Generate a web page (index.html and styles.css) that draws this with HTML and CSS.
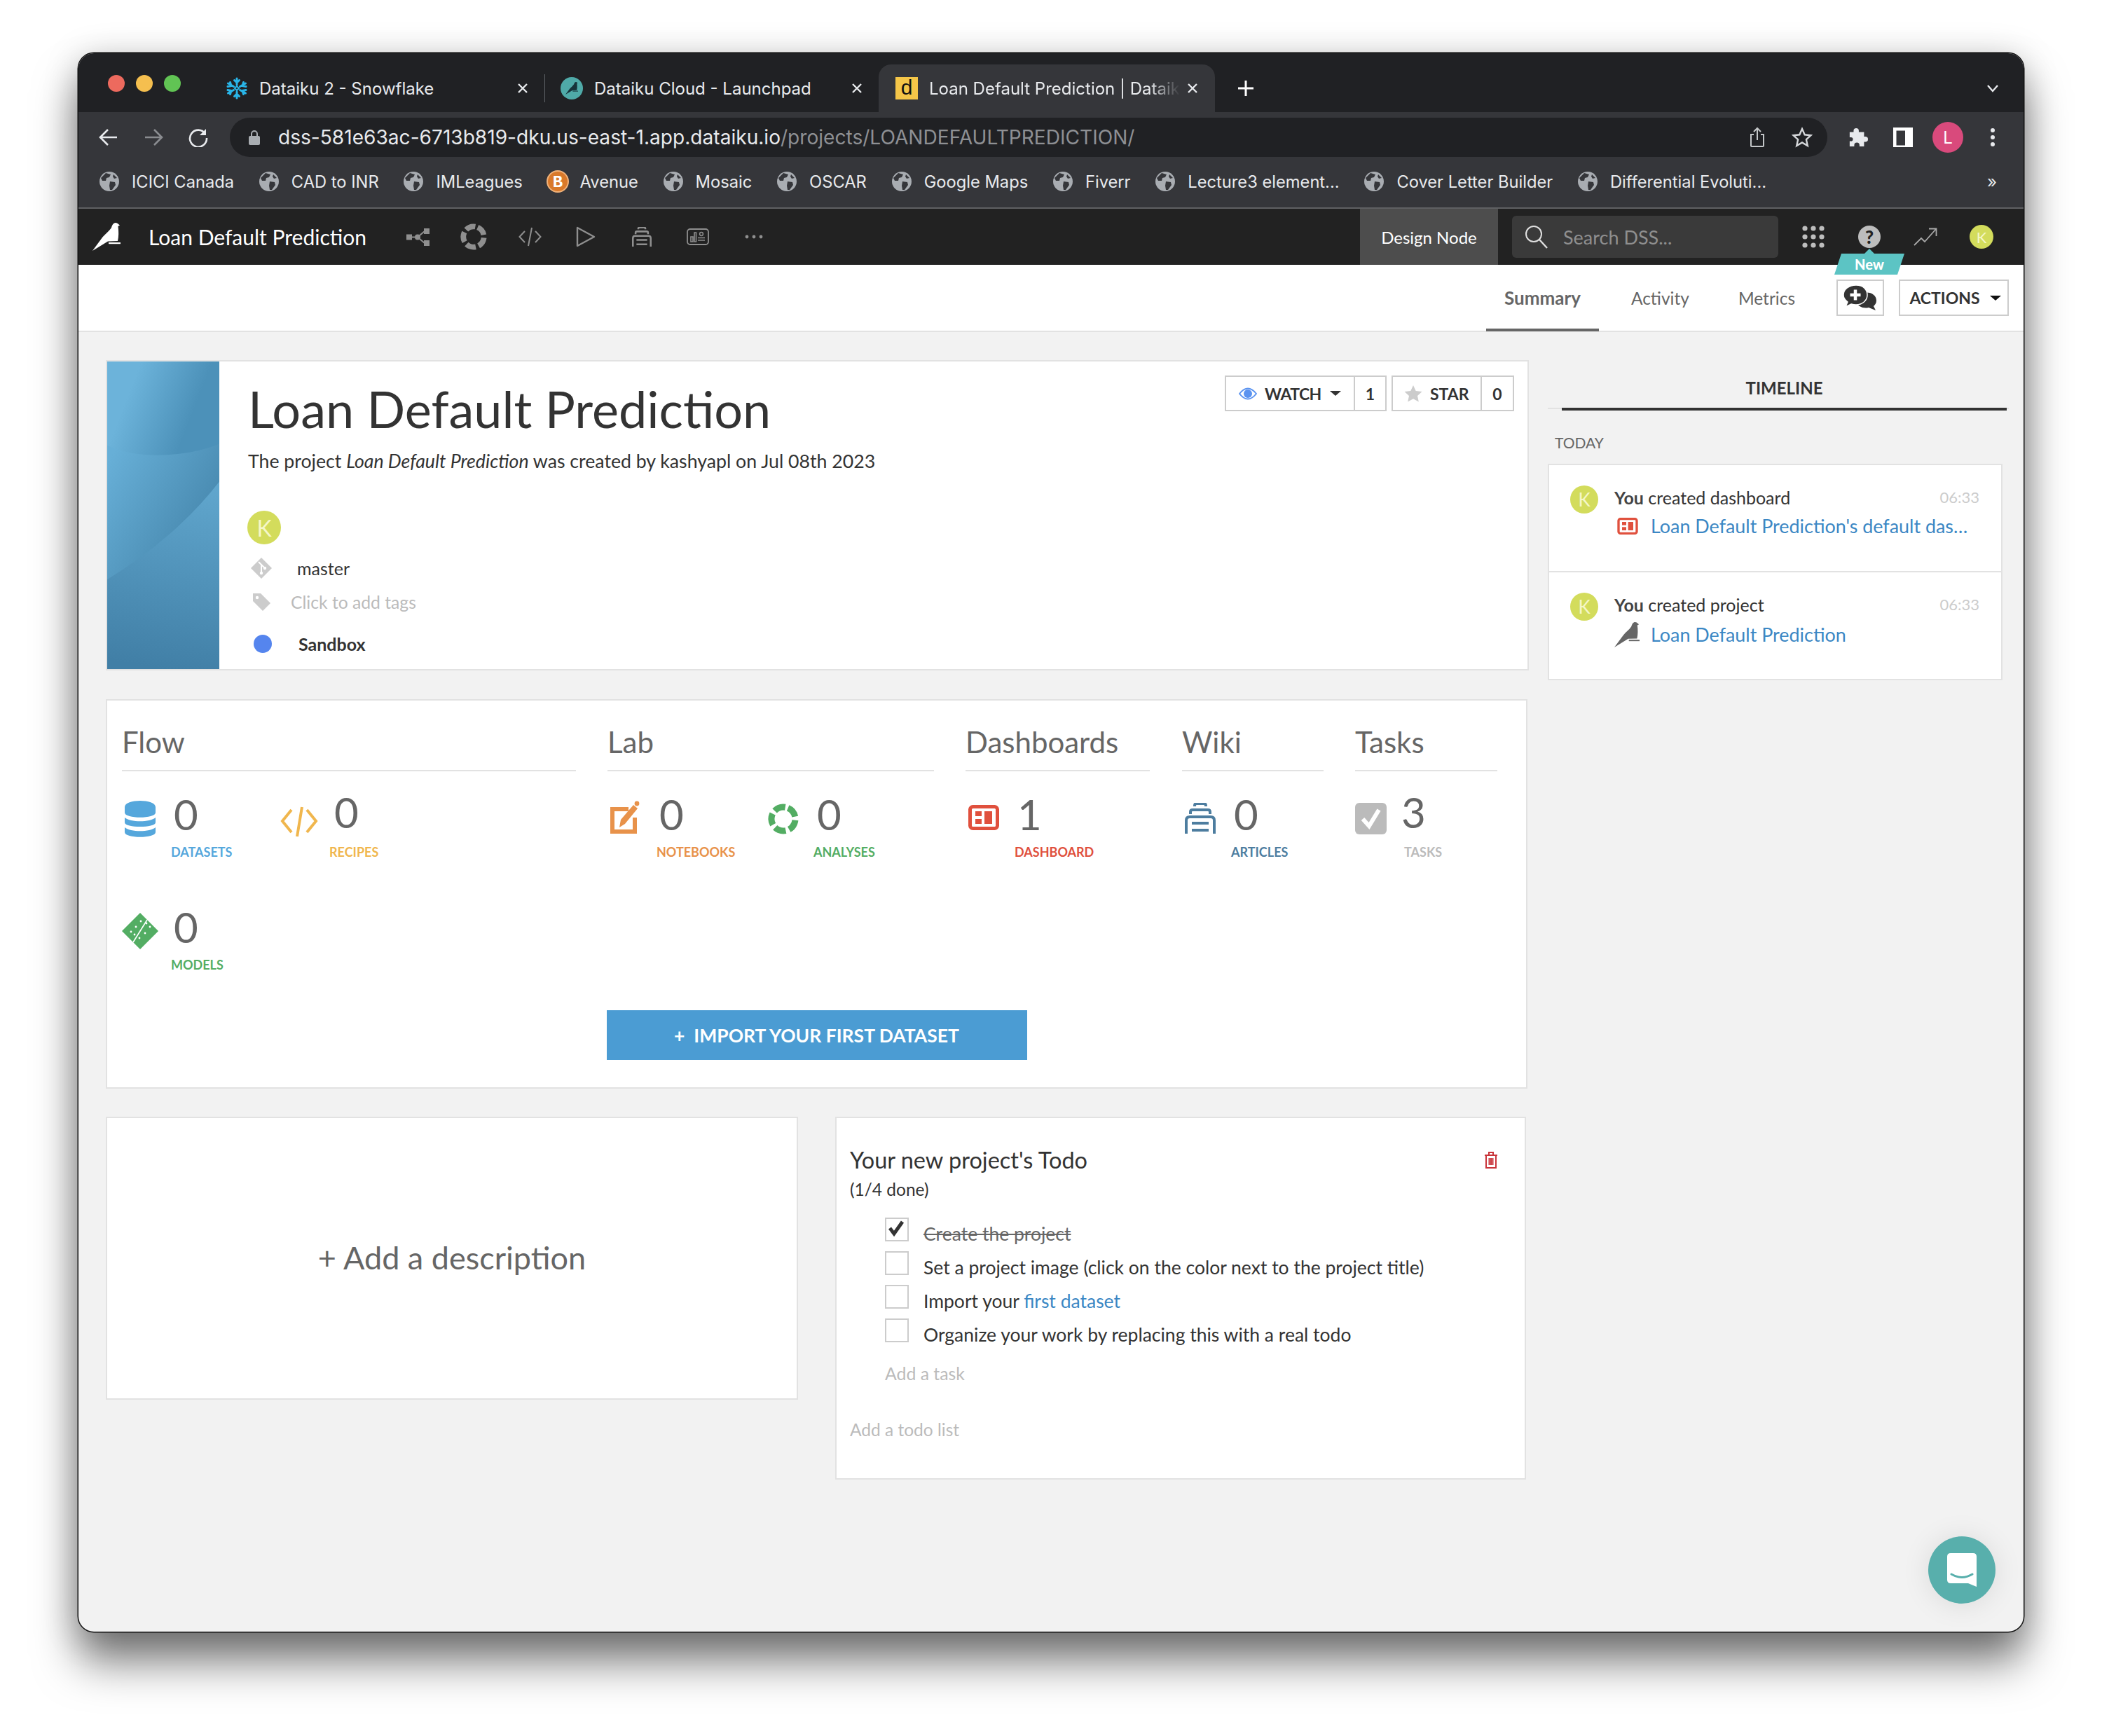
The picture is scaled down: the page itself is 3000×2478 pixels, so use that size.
FILE: index.html
```html
<!DOCTYPE html>
<html lang="en">
<head>
<meta charset="utf-8">
<title>Loan Default Prediction | Dataiku</title>
<link rel="stylesheet" href="styles.css">
</head>
<body>
<svg class="defs" width="0" height="0">
  <defs>
    <symbol id="globe" viewBox="0 0 28 28">
      <circle cx="14" cy="14" r="14" fill="#a9adb2"/>
      <path d="M9 2 L16 4 L14 8 L10 9 L9 13 L4 13 L2 9 Z M15 14 L22 15 L23 19 L18 26 L15 26 L14 20 Z M20 4 L25 9 L21 10 L19 7 Z" fill="#35363a"/>
    </symbol>
    <symbol id="bird" viewBox="0 0 40 40">
      <path d="M0 40 L14 21 C18 16 24 12 27 7 C28 3 30 0 33 0 C35 0 36 1 37 2 L39 3.5 L36.5 5 C37.5 12 37.5 20 36 26 L22 26.5 Z"/>
      <rect x="23" y="28" width="17" height="2.2"/>
    </symbol>
    <symbol id="wiki" viewBox="0 0 44 44">
      <path d="M14 5 V4 Q14 1 17 1 H27 Q30 1 30 4 V5 M8 16 V13 Q8 10 11 10 H33 Q36 10 36 13 V16 M2 44 V25 Q2 20 7 20 H37 Q42 20 42 25 V44 M10 29 H34 M10 39 H34" fill="none" stroke="currentColor" stroke-width="4"/>
    </symbol>
    <symbol id="dash" viewBox="0 0 44 36">
      <rect x="2.5" y="2.5" width="39" height="31" rx="4" fill="none" stroke="currentColor" stroke-width="5"/>
      <rect x="10" y="9" width="9" height="7" fill="currentColor"/>
      <rect x="10" y="20" width="9" height="7" fill="currentColor"/>
      <rect x="23" y="9" width="11" height="18" fill="currentColor"/>
    </symbol>
    <symbol id="ring" viewBox="0 0 44 44">
      <circle cx="22" cy="22" r="17" fill="none" stroke="currentColor" stroke-width="9" stroke-dasharray="16.4 5" transform="rotate(-67 22 22)"/>
    </symbol>
    <symbol id="close" viewBox="0 0 16 16">
      <path d="M2 2 L14 14 M14 2 L2 14" fill="none" stroke="currentColor" stroke-width="2.4"/>
    </symbol>
  </defs>
</svg>

<div class="window">
  <div class="tabstrip">
    <div class="lights">
      <span class="light light-red"></span>
      <span class="light light-yellow"></span>
      <span class="light light-green"></span>
    </div>
    <div class="tab tab-one">
      <svg class="favicon" viewBox="0 0 32 32" fill="none" stroke="#29b5e8" stroke-width="3" stroke-linecap="round">
        <path d="M16 2 V11 M12.5 4.5 L16 8 L19.5 4.5 M16 30 V21 M12.5 27.5 L16 24 L19.5 27.5 M3.5 9 L11.5 13.5 M3 13.5 L8 12.5 L6.5 7.5 M28.5 23 L20.5 18.5 M29 18.5 L24 19.5 L25.5 24.5 M28.5 9 L20.5 13.5 M29 13.5 L24 12.5 L25.5 7.5 M3.5 23 L11.5 18.5 M3 18.5 L8 19.5 L6.5 24.5"/>
        <path d="M16 13 L19 16 L16 19 L13 16 Z" stroke-width="2"/>
      </svg>
      <span class="tab-title">Dataiku 2 - Snowflake</span>
      <svg class="tab-close"><use href="#close"/></svg>
    </div>
    <span class="tab-sep"></span>
    <div class="tab tab-two">
      <svg class="favicon" viewBox="0 0 32 32">
        <circle cx="16" cy="16" r="16" fill="#4faaa8"/>
        <svg x="7" y="6" width="18" height="20" viewBox="0 0 40 40" fill="#17333a"><use href="#bird"/></svg>
      </svg>
      <span class="tab-title">Dataiku Cloud - Launchpad</span>
      <svg class="tab-close"><use href="#close"/></svg>
    </div>
    <div class="tab tab-active">
      <span class="favicon-d">d</span>
      <span class="tab-title tab-title-fade">Loan Default Prediction | Dataiku</span>
      <svg class="tab-close"><use href="#close"/></svg>
    </div>
    <svg class="tab-plus" viewBox="0 0 24 24"><path d="M12 1 V23 M1 12 H23" fill="none" stroke="#fff" stroke-width="3"/></svg>
    <svg class="tab-chevron" viewBox="0 0 18 12"><path d="M2 2 L9 10 L16 2" fill="none" stroke="#e8eaed" stroke-width="2.4"/></svg>
  </div>

  <div class="toolbar">
    <span class="tool"><svg viewBox="0 0 28 28" class="tool-icon"><path d="M26 14 H3 M13 3 L2 14 L13 25" fill="none" stroke="#e8eaed" stroke-width="2.6"/></svg></span>
    <span class="tool"><svg viewBox="0 0 28 28" class="tool-icon"><path d="M2 14 H25 M15 3 L26 14 L15 25" fill="none" stroke="#8a8c90" stroke-width="2.6"/></svg></span>
    <span class="tool"><svg viewBox="0 0 28 28" class="tool-icon"><path d="M24 9 A12 12 0 1 0 26 15" fill="none" stroke="#e8eaed" stroke-width="2.6"/><path d="M25 2 V11 H16 Z" fill="#e8eaed"/></svg></span>
    <div class="address">
      <svg class="lock" viewBox="0 0 16 22"><path d="M4 9 V6 A4 4 0 0 1 12 6 V9" fill="none" stroke="#a9adb2" stroke-width="2"/><rect y="9" width="16" height="13" rx="2" fill="#a9adb2"/></svg>
      <span class="url">dss-581e63ac-6713b819-dku.us-east-1.app.dataiku.io<span class="url-path">/projects/LOANDEFAULTPREDICTION/</span></span>
      <span class="addr-tool"><svg viewBox="0 0 24 30" class="addr-icon"><path d="M7 11 H3 V27 Q3 28 4 28 H20 Q21 28 21 27 V11 H17 M12 19 V2 M7 7 L12 2 L17 7" fill="none" stroke="#c4c7c9" stroke-width="2"/></svg></span>
      <span class="addr-tool"><svg viewBox="0 0 30 30" class="addr-icon"><path d="M15 3 L18.7 11.3 L27.5 12.2 L20.9 18.2 L22.8 27 L15 22.4 L7.2 27 L9.1 18.2 L2.5 12.2 L11.3 11.3 Z" fill="none" stroke="#d5d7da" stroke-width="2.4"/></svg></span>
    </div>
    <div class="ext">
      <span class="tool"><svg viewBox="0 0 30 30" class="tool-icon"><path d="M12 1 Q16 1 16 5 V7 H24 V14 H26 Q30 14 30 18 Q30 22 26 22 H24 V29 H17 V27 Q17 23 13 23 Q9 23 9 27 V29 H2 V21 H4 Q7 21 7 18 Q7 15 4 15 H2 V7 H8 V5 Q8 1 12 1 Z" fill="#e8eaed"/></svg></span>
      <span class="tool"><svg viewBox="0 0 28 28" class="tool-icon"><rect x="2" y="2" width="24" height="26" fill="none" stroke="#fff" stroke-width="5"/><rect x="17" y="3" width="10" height="24" fill="#fff"/></svg></span>
      <span class="tool"><span class="profile">L</span></span>
      <span class="tool"><svg viewBox="0 0 6 26" class="menu-icon"><circle cx="3" cy="3" r="3" fill="#e8eaed"/><circle cx="3" cy="13" r="3" fill="#e8eaed"/><circle cx="3" cy="23" r="3" fill="#e8eaed"/></svg></span>
    </div>
  </div>

  <div class="bookmarks">
    <span class="bm"><svg class="bm-icon"><use href="#globe"/></svg>ICICI Canada</span>
    <span class="bm"><svg class="bm-icon"><use href="#globe"/></svg>CAD to INR</span>
    <span class="bm"><svg class="bm-icon"><use href="#globe"/></svg>IMLeagues</span>
    <span class="bm bm-avenue"><svg class="bm-icon bm-icon-b" viewBox="0 0 32 32"><circle cx="16" cy="16" r="15" fill="#d9792a" stroke="#f0b27a" stroke-width="2"/><text x="16" y="24" text-anchor="middle" class="bm-letter">B</text></svg>Avenue</span>
    <span class="bm"><svg class="bm-icon"><use href="#globe"/></svg>Mosaic</span>
    <span class="bm"><svg class="bm-icon"><use href="#globe"/></svg>OSCAR</span>
    <span class="bm"><svg class="bm-icon"><use href="#globe"/></svg>Google Maps</span>
    <span class="bm"><svg class="bm-icon"><use href="#globe"/></svg>Fiverr</span>
    <span class="bm"><svg class="bm-icon"><use href="#globe"/></svg>Lecture3 element...</span>
    <span class="bm"><svg class="bm-icon"><use href="#globe"/></svg>Cover Letter Builder</span>
    <span class="bm"><svg class="bm-icon"><use href="#globe"/></svg>Differential Evoluti...</span>
    <span class="bm-more">»</span>
  </div>

  <nav class="dss-nav">
    <svg class="dss-logo" fill="#fff"><use href="#bird"/></svg>
    <span class="dss-title">Loan Default Prediction</span>
    <span class="nav-icon"><svg class="ni-flow" viewBox="0 0 33 25"><rect y="8.5" width="8" height="8" fill="#8f8f8f"/><rect x="25" width="8" height="8" fill="#8f8f8f"/><rect x="25" y="17" width="8" height="8" fill="#8f8f8f"/><circle cx="16" cy="12.5" r="4" fill="#8f8f8f"/><path d="M8 12.5 H16 L26 4 M16 12.5 L26 21" fill="none" stroke="#8f8f8f" stroke-width="2"/></svg></span>
    <span class="nav-icon nav-ring"><svg class="ni-ring"><use href="#ring"/></svg></span>
    <span class="nav-icon"><svg class="ni-code" viewBox="0 0 33 28"><path d="M9 6 L1.5 14 L9 22 M24 6 L31.5 14 L24 22 M19 1 L14 27" fill="none" stroke="#8f8f8f" stroke-width="2"/></svg></span>
    <span class="nav-icon"><svg class="ni-play" viewBox="0 0 28 30"><path d="M2 2 L26 15 L2 28 Z" fill="none" stroke="#8f8f8f" stroke-width="2.4" stroke-linejoin="round"/></svg></span>
    <span class="nav-icon nav-wiki"><svg class="ni-wiki"><use href="#wiki"/></svg></span>
    <span class="nav-icon"><svg class="ni-board" viewBox="0 0 32 24"><rect x="1" y="1" width="30" height="22" rx="4" fill="none" stroke="#8f8f8f" stroke-width="1.8"/><path d="M6 12 H9 V19 H6 Z M11 6 H13.5 V19 H11 Z M16 17 H26 M16 13.5 H26" fill="none" stroke="#8f8f8f" stroke-width="1.6"/><circle cx="21" cy="8" r="2.4" fill="none" stroke="#8f8f8f" stroke-width="1.5"/></svg></span>
    <span class="nav-icon"><svg class="ni-dots" viewBox="0 0 26 6"><circle cx="3" cy="3" r="2.4" fill="#8f8f8f"/><circle cx="13" cy="3" r="2.4" fill="#8f8f8f"/><circle cx="23" cy="3" r="2.4" fill="#8f8f8f"/></svg></span>
    <span class="node-name">Design Node</span>
    <div class="search">
      <svg class="search-icon" viewBox="0 0 34 34"><circle cx="13" cy="13" r="11" fill="none" stroke="#e0e0e0" stroke-width="2"/><path d="M21 21 L32 33" stroke="#e0e0e0" stroke-width="2.4"/></svg>
      <span class="search-text">Search DSS...</span>
    </div>
    <span class="nav-icon nav-first"><svg class="ni-grid" viewBox="0 0 32 32"><g fill="#bdbdbd"><circle cx="4" cy="4" r="3.6"/><circle cx="16" cy="4" r="3.6"/><circle cx="28" cy="4" r="3.6"/><circle cx="4" cy="16" r="3.6"/><circle cx="16" cy="16" r="3.6"/><circle cx="28" cy="16" r="3.6"/><circle cx="4" cy="28" r="3.6"/><circle cx="16" cy="28" r="3.6"/><circle cx="28" cy="28" r="3.6"/></g></svg></span>
    <span class="nav-icon nav-help">
      <span class="help-dot">?</span>
      <span class="new-badge">New</span>
    </span>
    <span class="nav-icon"><svg class="ni-trend" viewBox="0 0 34 26"><path d="M1 25 L11 15 L16 20 L32 2 M22 1.5 H32.5 V12" fill="none" stroke="#a9a9a9" stroke-width="1.8"/></svg></span>
    <span class="nav-icon"><span class="avatar avatar-nav">K</span></span>
  </nav>

  <div class="subnav">
    <span class="subtab subtab-active">Summary</span>
    <span class="subtab">Activity</span>
    <span class="subtab subtab-last">Metrics</span>
    <span class="comment-btn">
      <svg viewBox="0 0 48 36" class="comment-icon">
        <path d="M26 12 C36 8 47 13 47 22 C47 26 45 28 43 30 L46 36 L36 32 C28 34 20 30 18 24 Z" fill="#333"/>
        <path d="M18 0 C29 0 34 7 34 14 C34 22 27 28 18 28 C15 28 13 27.5 11 27 L3 31 L6 24 C2 21 0 18 0 14 C0 6 8 0 18 0 Z" fill="#333" stroke="#fff" stroke-width="1.5"/>
        <path d="M17 6.5 V21.5 M9.5 14 H24.5" stroke="#fff" stroke-width="4.5"/>
      </svg>
    </span>
    <span class="actions-btn">ACTIONS<span class="caret"></span></span>
  </div>

  <main class="main">
    <div class="left-col">
      <section class="project-card">
        <svg class="project-image" viewBox="0 0 160 440" preserveAspectRatio="none">
          <defs>
            <linearGradient id="g1" x1="0.3" y1="0" x2="0.6" y2="0.32"><stop offset="0" stop-color="#6cb3da"/><stop offset="1" stop-color="#4c91b9"/></linearGradient>
            <linearGradient id="g2" x1="0.1" y1="0" x2="0.6" y2="0.62"><stop offset="0" stop-color="#67afd7"/><stop offset="1" stop-color="#4788ae"/></linearGradient>
            <linearGradient id="g3" x1="0.6" y1="0" x2="0.5" y2="1"><stop offset="0" stop-color="#60a6cd"/><stop offset="1" stop-color="#417fa6"/></linearGradient>
          </defs>
          <rect width="160" height="440" fill="url(#g1)"/>
          <path d="M0 120 Q30 134 70 134 Q120 134 160 118 V440 H0 Z" fill="url(#g2)"/>
          <path d="M160 172 Q100 250 0 312 V440 H160 Z" fill="url(#g3)"/>
        </svg>
        <div class="project-body">
          <div class="project-head">
            <h1 class="project-title">Loan Default Prediction</h1>
            <div class="social">
              <span class="social-btn social-watch">
                <svg class="eye" viewBox="0 0 26 18"><path d="M1 9 Q13 -6 25 9 Q13 24 1 9 Z" fill="none" stroke="#5b93f0" stroke-width="2"/><circle cx="13" cy="9" r="6" fill="#5b93f0"/></svg>
                WATCH<span class="caret caret-small"></span>
              </span>
              <span class="social-count">1</span>
              <span class="social-btn social-star">
                <svg class="star" viewBox="0 0 26 26"><path d="M13 1 L16.7 9 L25.5 10 L19 16 L20.8 24.6 L13 20.3 L5.2 24.6 L7 16 L0.5 10 L9.3 9 Z" fill="#ccc"/></svg>
                STAR
              </span>
              <span class="social-count social-count-star">0</span>
            </div>
          </div>
          <p class="project-sub">The project <em>Loan Default Prediction</em> was created by kashyapl on Jul 08th 2023</p>
          <span class="avatar avatar-project">K</span>
          <div class="meta meta-branch">
            <svg class="meta-icon" viewBox="0 0 30 30"><path d="M15 0 L30 15 L15 30 L0 15 Z" fill="#ccc"/><path d="M11 6 L20 15 M15 10 V22" stroke="#fff" stroke-width="2"/><circle cx="20" cy="15" r="2.2" fill="#fff"/><circle cx="15" cy="22" r="2.2" fill="#fff"/></svg>
            <span class="meta-text">master</span>
          </div>
          <div class="meta meta-tags">
            <svg class="meta-icon" viewBox="0 0 30 30"><path d="M3 3 H14 L28 17 L17 28 L3 14 Z" fill="#ccc"/><circle cx="9" cy="9" r="2.2" fill="#fff"/></svg>
            <span class="meta-text meta-muted">Click to add tags</span>
          </div>
          <div class="meta meta-status">
            <span class="status-dot"></span>
            <span class="meta-text meta-strong">Sandbox</span>
          </div>
        </div>
      </section>

      <section class="stats-card">
        <div class="stats-cols">
          <div class="stats-col col-flow">
            <h2 class="stats-head">Flow</h2>
            <div class="stats-list">
              <div class="stat stat-wide">
                <svg class="stat-icon" viewBox="0 0 60 60" fill="#55a7dc"><path d="M4 16 C4 4 48 4 48 16 V24 C48 33 4 33 4 24 Z M4 31 C12 38 40 38 48 31 V38 C48 46 4 46 4 38 Z M4 45 C12 52 40 52 48 45 V52 C48 61 4 61 4 52 Z"/></svg>
                <span class="stat-num">0</span><span class="stat-label c-blue">DATASETS</span>
              </div>
              <div class="stat stat-wide stat-raised stat-recipes">
                <svg class="stat-icon" viewBox="0 0 60 60" fill="none" stroke="#f0b64d" stroke-width="4"><path d="M16 20 L3 36 L16 52 M38 20 L51 36 L38 52 M31 16 L24 58"/></svg>
                <span class="stat-num">0</span><span class="stat-label c-yellow">RECIPES</span>
              </div>
              <div class="stat stat-wide">
                <svg class="stat-icon" viewBox="0 0 60 60"><path d="M26 6 L52 32 L26 58 L0 32 Z" fill="#53ad63"/><path d="M36 16 L16 48" stroke="#fff" stroke-width="1.6"/><g fill="#fff"><circle cx="27" cy="18" r="1.4"/><circle cx="20" cy="26" r="1.4"/><circle cx="13" cy="33" r="1.4"/><circle cx="40" cy="26" r="1.4"/><circle cx="35" cy="21" r="1.4"/><circle cx="33" cy="35" r="1.4"/><circle cx="25" cy="42" r="1.4"/><circle cx="18" cy="37" r="1.4"/></g></svg>
                <span class="stat-num">0</span><span class="stat-label c-green">MODELS</span>
              </div>
            </div>
          </div>
          <div class="stats-col col-lab">
            <h2 class="stats-head">Lab</h2>
            <div class="stats-list">
              <div class="stat stat-lab">
                <svg class="stat-icon" viewBox="0 0 60 60"><path d="M30 19 H7 V51 H39 V31" fill="none" stroke="#e8924a" stroke-width="6"/><path d="M17 45 L19 34 L37 13 L43 18 L25 40 Z" fill="#e8924a"/><circle cx="42" cy="11" r="3.4" fill="#e8924a"/></svg>
                <span class="stat-num">0</span><span class="stat-label c-orange">NOTEBOOKS</span>
              </div>
              <div class="stat stat-lab stat-analyses">
                <svg class="stat-icon stat-icon-ring"><use href="#ring"/></svg>
                <span class="stat-num">0</span><span class="stat-label c-green">ANALYSES</span>
              </div>
            </div>
          </div>
          <div class="stats-col col-dash">
            <h2 class="stats-head">Dashboards</h2>
            <div class="stats-list">
              <div class="stat stat-wide">
                <svg class="stat-icon stat-icon-dash"><use href="#dash"/></svg>
                <span class="stat-num">1</span><span class="stat-label c-red">DASHBOARD</span>
              </div>
            </div>
          </div>
          <div class="stats-col col-wiki">
            <h2 class="stats-head">Wiki</h2>
            <div class="stats-list">
              <div class="stat stat-wide">
                <svg class="stat-icon stat-icon-wiki"><use href="#wiki"/></svg>
                <span class="stat-num">0</span><span class="stat-label c-slate">ARTICLES</span>
              </div>
            </div>
          </div>
          <div class="stats-col col-tasks">
            <h2 class="stats-head">Tasks</h2>
            <div class="stats-list">
              <div class="stat stat-wide stat-raised stat-tasks">
                <svg class="stat-icon" viewBox="0 0 60 60"><rect y="10" width="45" height="45" rx="6" fill="#bbb"/><path d="M11 33 L20 43 L34 20" fill="none" stroke="#fff" stroke-width="6"/></svg>
                <span class="stat-num">3</span><span class="stat-label c-gray">TASKS</span>
              </div>
            </div>
          </div>
        </div>
        <button class="import-btn" type="button">+&nbsp;&nbsp;IMPORT YOUR FIRST DATASET</button>
      </section>

      <div class="lower-row">
        <section class="desc-card">+ Add a description</section>
        <section class="todo-card">
          <div class="todo-head">
            <h3 class="todo-title">Your new project's Todo</h3>
            <svg class="trash" viewBox="0 0 20 26" fill="none" stroke="#c9343a" stroke-width="2"><path d="M1 6 H19 M7 5 V2 H13 V5 M3 6 V24 H17 V6 M7.5 10 V20 M10 10 V20 M12.5 10 V20"/></svg>
          </div>
          <div class="todo-count">(1/4 done)</div>
          <div class="task"><span class="check"><svg viewBox="0 0 24 24" class="check-mark"><path d="M3 11 L9 19 L21 2" fill="none" stroke="#333" stroke-width="5"/></svg></span><span class="task-text task-done">Create the project</span></div>
          <div class="task"><span class="check"></span><span class="task-text">Set a project image (click on the color next to the project title)</span></div>
          <div class="task"><span class="check"></span><span class="task-text">Import your <a class="link">first dataset</a></span></div>
          <div class="task"><span class="check"></span><span class="task-text">Organize your work by replacing this with a real todo</span></div>
          <div class="add-task">Add a task</div>
          <div class="add-list">Add a todo list</div>
        </section>
      </div>
    </div>

    <aside class="right-col">
      <div class="timeline-head"><div class="timeline-title">TIMELINE</div></div>
      <div class="today">TODAY</div>
      <div class="timeline-card">
        <div class="tl-item">
          <span class="avatar avatar-tl">K</span>
          <div class="tl-body">
            <div class="tl-line"><span><b>You</b> created dashboard</span><span class="tl-time">06:33</span></div>
            <div class="tl-link-row"><svg class="tl-icon tl-icon-dash"><use href="#dash"/></svg><a class="link tl-link">Loan Default Prediction's default das…</a></div>
          </div>
        </div>
        <div class="tl-item">
          <span class="avatar avatar-tl">K</span>
          <div class="tl-body">
            <div class="tl-line"><span><b>You</b> created project</span><span class="tl-time">06:33</span></div>
            <div class="tl-link-row"><svg class="tl-icon tl-icon-bird" fill="#666"><use href="#bird"/></svg><a class="link tl-link">Loan Default Prediction</a></div>
          </div>
        </div>
      </div>
    </aside>
  </main>

  <div class="chat-bubble">
    <svg viewBox="0 0 42 48" class="chat-icon"><path d="M5 0 H37 Q42 0 42 5 V48 L30 43 H5 Q0 43 0 38 V5 Q0 0 5 0 Z" fill="#fff"/><path d="M6 30 Q21 39 36 30" fill="none" stroke="#58afac" stroke-width="3" stroke-linecap="round"/></svg>
  </div>
</div>
</body>
</html>
```

FILE: styles.css
```css
* { box-sizing: border-box; }
html, body { margin: 0; height: 100%; }
body {
  width: 3000px;
  height: 2478px;
  padding: 76px 0 0 112px;
  background: #fff;
  overflow: hidden;
  font-family: "Lato", "Noto Sans", sans-serif;
  color: #333;
}
.defs { position: absolute; }
h1, h2, h3, p { margin: 0; font-weight: 400; }

.window {
  position: relative;
  width: 2776px;
  height: 2253px;
  border-radius: 22px;
  background: #f2f2f2;
  overflow: clip;
  box-shadow: 0 0 0 1.5px #111, 0 44px 62px rgba(0,0,0,.5), 0 6px 50px rgba(0,0,0,.22);
}

/* browser chrome */
.tabstrip {
  display: flex;
  align-items: flex-end;
  height: 84px;
  padding-left: 42px;
  background: #202124;
  font-family: "Inter", sans-serif;
  font-size: 24px;
  color: #e8eaed;
}
.lights { display: flex; gap: 16px; align-self: flex-start; margin-top: 31px; width: 144px; }
.light { width: 24px; height: 24px; border-radius: 50%; }
.light-red { background: #ed6a5e; }
.light-yellow { background: #f5bf4f; }
.light-green { background: #61c454; }
.tab { display: flex; align-items: center; height: 68px; flex: none; }
.tab-one { width: 479px; padding: 0 23px 0 24px; }
.tab-two { width: 476px; padding: 0 23px 0 22px; }
.tab-active { width: 480px; padding: 0 24px; background: #35363a; border-radius: 18px 18px 0 0; }
.tab-sep { width: 1px; height: 40px; background: #5f6368; margin-bottom: 14px; flex: none; }
.favicon { width: 32px; height: 32px; flex: none; }
.favicon-d {
  width: 32px; height: 32px; flex: none;
  background: #f5c648; color: #111;
  font-family: "Liberation Sans", sans-serif; font-size: 30px; line-height: 29px; text-align: center;
}
.tab-title { margin-left: 16px; flex: 1; white-space: nowrap; overflow: hidden; }
.tab-title-fade { -webkit-mask-image: linear-gradient(90deg, #000 88%, transparent 100%); mask-image: linear-gradient(90deg, #000 88%, transparent 100%); }
.tab-close { width: 16px; height: 16px; flex: none; color: #e8eaed; margin-left: 10px; }
.tab-plus { width: 24px; height: 24px; margin: 0 0 22px 32px; flex: none; }
.tab-chevron { width: 18px; height: 12px; margin: 0 35px 28px auto; flex: none; }

.toolbar {
  display: flex;
  height: 64px;
  padding: 8px 0 0 11px;
  background: #35363a;
  font-family: "Inter", sans-serif;
}
.tool { display: flex; align-items: center; justify-content: center; width: 64px; height: 56px; flex: none; }
.tool-icon { width: 28px; height: 28px; }
.menu-icon { width: 6px; height: 26px; }
.address {
  display: flex;
  align-items: center;
  width: 2280px;
  height: 56px;
  margin-left: 13px;
  padding: 0 4px 0 27px;
  border-radius: 28px;
  background: #202124;
  font-size: 28.1px;
  color: #e8eaed;
}
.lock { width: 16px; height: 22px; flex: none; }
.url { margin-left: 26px; flex: 1; white-space: nowrap; }
.url-path { color: #8e9094; }
.addr-tool { display: flex; align-items: center; justify-content: center; width: 64px; height: 56px; flex: none; }
.addr-icon { width: 30px; height: 30px; }
.ext { display: flex; margin-left: 12px; }
.profile {
  display: flex; align-items: center; justify-content: center;
  width: 44px; height: 44px; border-radius: 50%;
  background: #d94a7c; color: #fff; font-size: 24px;
}

.bookmarks {
  display: flex;
  align-items: center;
  gap: 35.8px;
  height: 74px;
  padding: 0 38px 2px 30px;
  background: #35363a;
  border-bottom: 2px solid #5f6063;
  font-family: "Inter", sans-serif;
  font-size: 23.7px;
  color: #e8eaed;
}
.bm { display: flex; align-items: center; gap: 18px; white-space: nowrap; }
.bm-icon { width: 28px; height: 28px; flex: none; }
.bm-icon-b { width: 32px; height: 32px; }
.bm-avenue { margin-left: -2px; gap: 16px; }
.bm-letter { font-family: "Liberation Mono", monospace; font-size: 24px; font-weight: 700; fill: #fff; }
.bm-more { margin-left: auto; font-size: 24px; }

/* DSS navigation */
.dss-nav {
  display: flex;
  align-items: center;
  height: 80px;
  padding: 0 20px 0 20px;
  background: #222;
  color: #fff;
}
.dss-logo { width: 40px; height: 40px; flex: none; }
.dss-title { width: 344px; margin-left: 40px; font-size: 30px; white-space: nowrap; flex: none; }
.nav-icon { position: relative; display: flex; align-items: center; justify-content: center; width: 80px; height: 80px; flex: none; }
.nav-ring, .nav-wiki { color: #8f8f8f; }
.ni-flow { width: 33px; height: 25px; }
.ni-ring { width: 38px; height: 38px; }
.ni-code { width: 33px; height: 28px; }
.ni-play { width: 28px; height: 30px; }
.ni-wiki { width: 28px; height: 28px; }
.ni-board { width: 32px; height: 24px; }
.ni-dots { width: 26px; height: 6px; }
.ni-grid { width: 32px; height: 32px; }
.ni-trend { width: 34px; height: 26px; }
.node-name {
  display: flex; align-items: center; justify-content: center;
  width: 197px; height: 80px; margin-left: auto;
  background: #4d4d4d; font-size: 24px;
}
.search {
  display: flex; align-items: center;
  width: 380px; height: 60px; margin: 0 10px 0 20px; padding-left: 18px;
  border-radius: 6px; background: #3a3a3a;
}
.search-icon { width: 34px; height: 34px; flex: none; }
.search-text { margin-left: 21px; font-size: 27px; color: #8f8f8f; }
.help-dot {
  display: flex; align-items: center; justify-content: center;
  width: 32px; height: 32px; border-radius: 50%;
  background: #bdbdbd; color: #222; font-size: 26px; font-weight: 900;
}
.new-badge {
  position: absolute; left: -10px; top: 64px; z-index: 2;
  width: 100px; height: 30px;
  background: #5cc4c4; color: #fff;
  clip-path: polygon(10% 0, 100% 0, 90% 100%, 0 100%);
  font-size: 20px; font-weight: 900; line-height: 30px; text-align: center;
}
.nav-help::after {
  content: ""; position: absolute; left: 33px; top: 57px;
  border: 7px solid transparent; border-top: 0; border-bottom-color: #5cc4c4;
}
.avatar {
  display: flex; align-items: center; justify-content: center; flex: none;
  border-radius: 50%; background: #d3dc5c; color: #f5f7c8;
}
.avatar-nav { width: 34px; height: 34px; font-size: 22px; }

/* sub navigation */
.subnav {
  display: flex;
  justify-content: flex-end;
  align-items: center;
  gap: 20px;
  height: 96px;
  padding: 0 21px 0 0;
  background: #fff;
  border-bottom: 2px solid #e2e2e2;
  font-size: 24.5px;
  color: #666;
}
.subtab { position: relative; display: flex; align-items: center; height: 96px; padding: 0 26px; }
.subtab-active { font-size: 26px; font-weight: 700; }
.subtab-last { margin-left: -2px; }
.subtab-active::after {
  content: ""; position: absolute; left: 0; right: 0; bottom: 0;
  height: 4px; background: #666;
}
.comment-btn, .actions-btn {
  display: flex; align-items: center; justify-content: center;
  height: 52px; border: 2px solid #ccc; background: #fff;
}
.comment-btn { width: 68px; margin-left: 13px; }
.comment-icon { width: 48px; height: 36px; }
.actions-btn { width: 157px; margin-left: 1px; padding-left: 4px; color: #333; font-size: 23px; font-weight: 700; }
.caret {
  display: inline-block; margin-left: 14px;
  border: 7px solid transparent; border-bottom: 0; border-top: 7px solid #111;
  border-left-width: 8px; border-right-width: 8px;
}
.caret-small { border-top-color: #333; margin-left: 12px; }

/* page */
.main { display: flex; padding: 40px 0 0 39px; align-items: flex-start; }
.left-col { width: 2031px; flex: none; }
.right-col { width: 658px; margin-left: 27px; flex: none; }

.project-card {
  display: flex; height: 443px;
  border: 2px solid #e2e2e2; background: #fff;
}
.project-image { width: 160px; height: 439px; flex: none; display: block; }
.project-body { flex: 1; padding: 20px 19px 0 41px; }
.project-head { display: flex; justify-content: space-between; align-items: flex-start; }
.project-title { margin-top: 7px; font-size: 72px; line-height: 80px; color: #333; white-space: nowrap; }
.social { display: flex; font-size: 23px; font-weight: 700; color: #333; }
.social-btn, .social-count {
  display: flex; align-items: center; height: 51px;
  border: 2px solid #ccc; background: #fff;
}
.social-btn { border-right: 0; }
.social-watch { width: 184px; padding-left: 18px; letter-spacing: -0.6px; }
.social-star { width: 127px; padding-left: 16px; margin-left: 7px; }
.social-count { justify-content: center; width: 47px; }
.social-count-star { width: 48px; }
.eye { width: 26px; height: 18px; margin-right: 11px; flex: none; }
.star { width: 26px; height: 26px; margin-right: 11px; flex: none; }
.project-sub { margin-top: 15px; font-size: 26.7px; line-height: 40px; color: #333; white-space: nowrap; }
.avatar-project { width: 48px; height: 48px; margin: 51px 0 0 -1px; font-size: 32px; }
.meta { display: flex; align-items: center; height: 36px; font-size: 25px; }
.meta-branch { margin-top: 16px; }
.meta-tags { margin-top: 12px; font-size: 24.7px; }
.meta-status { margin-top: 24px; }
.meta-icon { width: 30px; height: 30px; margin-left: 4px; flex: none; }
.meta-branch .meta-text { margin-left: 36px; }
.meta-tags .meta-text { margin-left: 27px; }
.meta-muted { color: #bbb; }
.meta-strong { font-weight: 700; margin-left: 38px; }
.status-dot { width: 26px; height: 26px; margin-left: 8px; border-radius: 50%; background: #5585ee; flex: none; }

.stats-card {
  height: 556px; width: 2029px; margin-top: 41px;
  border: 2px solid #e2e2e2; background: #fff;
}
.stats-cols { display: flex; gap: 45px; height: 442px; padding: 30px 0 0 21px; }
.stats-col { flex: none; }
.col-flow { width: 648px; }
.col-lab { width: 466px; }
.col-dash { width: 263px; }
.col-wiki { width: 202px; margin-left: 1px; }
.col-tasks { width: 203px; }
.stats-head {
  height: 71px; border-bottom: 2px solid #e2e2e2;
  font-size: 42px; line-height: 58px; color: #666;
}
.stats-list { display: flex; flex-wrap: wrap; }
.stat {
  display: grid;
  grid-template-columns: 70px 1fr;
  grid-template-rows: 60px 24px;
  row-gap: 10px;
  align-content: start;
  height: 161px; padding-top: 33px;
}
.stat-wide { width: 226px; }
.stat-lab { width: 229px; }
.stat-analyses { grid-template-columns: 65px 1fr; }
.stat-icon { grid-row: 1 / span 2; width: 60px; height: 60px; margin-top: 2px; grid-column: 1; }
.stat-icon-ring { width: 44px; height: 44px; margin-top: 13px; color: #53ad63; }
.stat-icon-dash { width: 44px; height: 36px; margin: 15px 0 0 4px; color: #e0503d; }
.stat-icon-wiki { width: 44px; height: 44px; margin: 12px 0 0 4px; color: #4d7d9f; }
.stat-num { grid-column: 2; margin: -2px 0 0 4px; font-size: 60px; line-height: 60px; color: #666; }
.stat-label { grid-column: 2; font-size: 18px; line-height: 24px; font-weight: 700; white-space: nowrap; }
.stat-raised .stat-num { margin-top: -5px; }
.stat-recipes .stat-num { margin-left: 7px; }
.stat-analyses .stat-num { margin-left: 5px; }
.stat-tasks .stat-num { margin-left: -4px; }
.c-blue { color: #55a7dc; }
.c-yellow { color: #f0b64d; }
.c-green { color: #53ad63; }
.c-orange { color: #e8924a; }
.c-red { color: #e0503d; }
.c-slate { color: #4d7d9f; }
.c-gray { color: #bbb; }
.import-btn {
  display: block; width: 600px; height: 71px; margin: 0 auto;
  border: 0; background: #4b9cd3; color: #fff;
  font: 700 26.5px "Lato", sans-serif;
}

.lower-row { display: flex; align-items: flex-start; gap: 53px; margin-top: 40px; }
.desc-card, .todo-card { border: 2px solid #e2e2e2; background: #fff; }
.desc-card {
  display: flex; align-items: center; justify-content: center;
  width: 988px; height: 404px; padding-bottom: 2px; font-size: 45px; color: #666;
}
.todo-card { width: 986px; height: 518px; padding: 38px 38px 0 19px; }
.todo-head { display: flex; justify-content: space-between; align-items: center; }
.todo-title { font-size: 32.5px; line-height: 44px; color: #333; }
.trash { width: 20px; height: 26px; flex: none; }
.todo-count { margin-top: 4px; font-size: 24.5px; line-height: 32px; }
.task { display: flex; gap: 21px; height: 48px; padding-left: 50px; font-size: 26.5px; }
.todo-count + .task { margin-top: 24px; }
.check { position: relative; width: 34px; height: 34px; border: 2px solid #ccc; flex: none; }
.check-mark { position: absolute; left: 2px; top: 2px; width: 24px; height: 24px; }
.task-text { line-height: 42px; margin-top: 2px; white-space: nowrap; }
.task-done { color: #666; text-decoration: line-through; }
.link { color: #3b87c4; }
.add-task { margin-top: 15px; padding-left: 50px; font-size: 24.8px; line-height: 32px; color: #bbb; }
.add-list { margin-top: 48px; font-size: 24.5px; line-height: 32px; color: #bbb; }

/* timeline */
.timeline-head { height: 70px; padding: 24px 3px 0 20px; border-bottom: 2px solid #e2e2e2; }
.timeline-title {
  height: 48px; border-bottom: 4px solid #333;
  font-size: 24px; line-height: 32px; font-weight: 700; text-align: center;
}
.today { margin-top: 32px; padding-left: 10px; font-size: 21px; line-height: 32px; color: #666; }
.timeline-card { width: 649px; margin-top: 14px; border: 2px solid #e2e2e2; background: #fff; }
.tl-item { display: flex; gap: 23px; height: 151px; padding: 29px 31px 0 30px; }
.tl-item + .tl-item { height: 154px; border-top: 2px solid #e2e2e2; }
.avatar-tl { width: 40px; height: 40px; font-size: 26px; }
.tl-body { flex: 1; }
.tl-line { display: flex; justify-content: space-between; margin-top: -1px; font-size: 25px; line-height: 36px; color: #333; white-space: nowrap; }
.tl-line b { color: #444; }
.tl-time { font-size: 22px; color: #ccc; }
.tl-link-row { display: flex; align-items: center; margin-top: 5px; white-space: nowrap; }
.tl-item + .tl-item .tl-link-row { margin-top: 7px; }
.tl-link { font-size: 26.9px; line-height: 36px; }
.tl-icon { flex: none; }
.tl-icon-dash { width: 30px; height: 24px; margin: 0 18px 0 4px; color: #e0503d; }
.tl-icon-bird { width: 36px; height: 36px; margin: 0 16px 0 0; }

.chat-bubble {
  position: absolute; right: 40px; bottom: 40px;
  display: flex; align-items: center; justify-content: center;
  width: 96px; height: 96px; border-radius: 50%;
  background: #58afac;
  box-shadow: 0 2px 40px rgba(0,0,0,.1);
}
.chat-icon { width: 42px; height: 48px; }
```
